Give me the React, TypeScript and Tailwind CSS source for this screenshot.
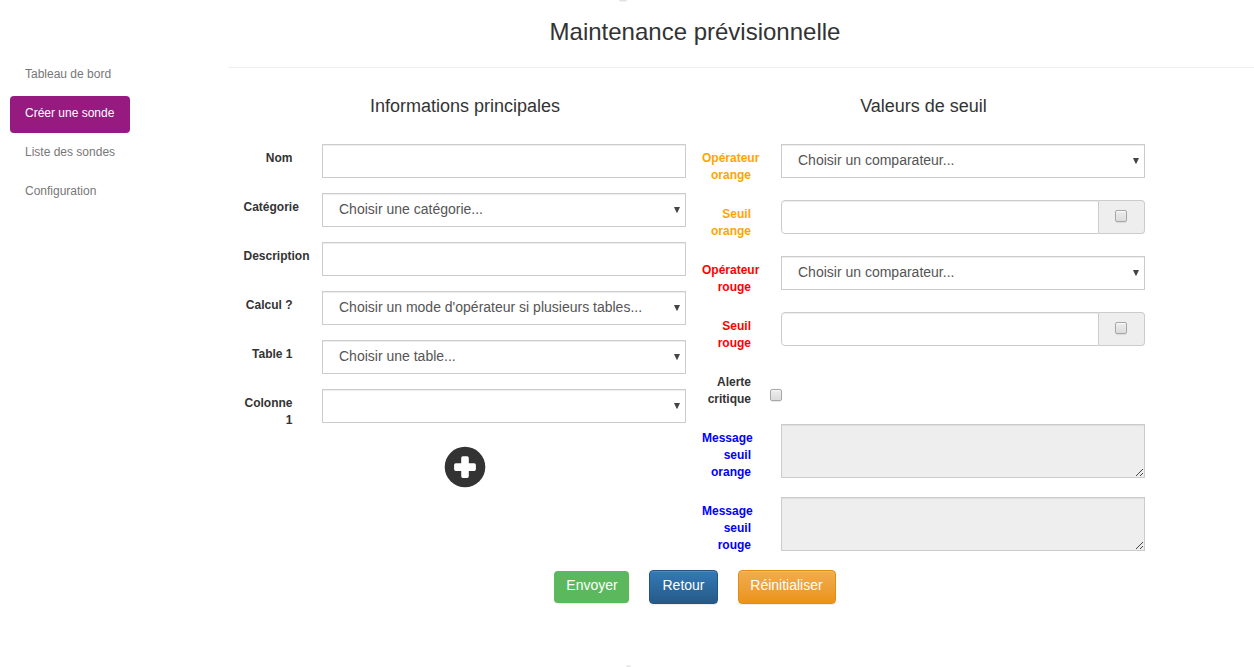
import { ReactNode } from 'react';

const FIELD =
  'h-[34px] w-[364px] border border-[#ccc] bg-white text-sm leading-5 text-[#555] shadow-[inset_0_1px_1px_rgba(0,0,0,0.075)] outline-none';

const NAV = ['Tableau de bord', 'Créer une sonde', 'Liste des sondes', 'Configuration'];

function Row({ label, color = 'text-[#333]', height = 'h-[49px]', gap = 'gap-[30px]', children }: {
  label: string; color?: string; height?: string; gap?: string; children: ReactNode;
}) {
  return (
    <div className={`flex items-start ${height} ${gap}`}>
      <label className={`w-[49px] shrink-0 pt-1.5 text-right text-xs leading-[17px] font-bold ${color}`}>{label}</label>
      {children}
    </div>
  );
}

// Rows of the left column, whose labels sit half a pixel further right.
function InfoRow({ label, children }: { label: string; children: ReactNode }) {
  return (
    <div className="flex h-[49px] items-start gap-[29.5px]">
      <label className="ml-[0.5px] w-[49px] shrink-0 pt-1.5 text-right text-xs leading-[17px] font-bold text-[#333]">{label}</label>
      {children}
    </div>
  );
}

function Select({ text = '' }: { text?: string }) {
  return (
    <div role="combobox" aria-label={text} className={`${FIELD} flex justify-between pt-[5px] pr-[5px] pl-4`}>
      <span>{text}</span>
      <svg className="mt-2 h-[6px] w-[6px]" viewBox="0 0 6 6" fill="#444">
        <path d="M0 0h6L3.3 5.8H2.7z" />
      </svg>
    </div>
  );
}

function Checkbox({ className = '' }: { className?: string }) {
  return (
    <input
      type="checkbox"
      className={`block size-3 shrink-0 appearance-none rounded-[2px] border border-[#a6a6a6] bg-linear-to-b from-[#ededed] to-[#dcdcdc] shadow-[0_1px_1px_rgba(0,0,0,0.08),inset_0_1px_1px_rgba(255,255,255,0.7)] ${className}`}
    />
  );
}

function Threshold() {
  return (
    <div className="flex h-[34px] w-[364px]">
      <input className="w-[318px] rounded-l border border-[#ccc] bg-white px-3 shadow-[inset_0_1px_1px_rgba(0,0,0,0.075)] outline-none" />
      <div className="w-[46px] rounded-r border border-l-0 border-[#ccc] bg-[#eee] pt-[9px] pl-4">
        <Checkbox />
      </div>
    </div>
  );
}

function MessageBox() {
  return (
    <div className="flex h-[54px] w-[364px] items-end justify-end border border-[#ccc] bg-[#eee] pr-px pb-px shadow-[inset_0_1px_1px_rgba(0,0,0,0.075)]">
      <svg className="size-[7px]" viewBox="0 0 7 7" fill="#444" shapeRendering="crispEdges">
        <path d="M0 6h1v1H0zM1 5h1v1H1zM2 4h1v1H2zM3 3h1v1H3zM4 2h1v1H4zM5 1h1v1H5zM6 0h1v1H6zM4 6h1v1H4zM5 5h1v1H5zM6 4h1v1H6z" />
      </svg>
    </div>
  );
}

export default function App() {
  return (
    <div className="relative flex h-[667px] w-[1254px] overflow-hidden bg-white font-['Liberation_Sans',Arial,sans-serif] text-[#333]">
      <div className="absolute top-0 left-[619px] h-[2px] w-[8px] rounded-b-full bg-linear-to-b from-[#dcdcdc] to-[#f7f7f7]" />
      <div className="absolute bottom-0 left-[626px] h-[2px] w-[5px] rounded-t-full bg-[#e9e9e9]" />

      <nav className="flex w-[228px] shrink-0 flex-col items-start gap-0.5 pt-[57px] pl-2.5 text-xs leading-[17px]">
        {NAV.map((item, i) => (
          <a key={item} className={`h-[37px] w-[120px] rounded px-[15px] pt-[9px] whitespace-nowrap ${i === 1 ? 'bg-[#961a80] text-white' : 'text-[#777]'}`}>
            {item}
          </a>
        ))}
      </nav>

      <main className="w-[1026px]">
        <header className="h-[68px] border-b border-[#eee] pt-[19px]">
          <h1 className="w-[934px] text-center text-2xl leading-[26px]">Maintenance prévisionnelle</h1>
        </header>

        <form>
          <div className="flex h-[502px] gap-4 pt-7 pl-[15px]">
            <section className="w-[443px]">
              <h2 className="mb-7 pl-px text-center text-lg leading-5">Informations principales</h2>
              <InfoRow label="Nom"><input className={FIELD} /></InfoRow>
              <InfoRow label="Catégorie"><Select text="Choisir une catégorie..." /></InfoRow>
              <InfoRow label="Description"><input className={FIELD} /></InfoRow>
              <InfoRow label="Calcul ?"><Select text="Choisir un mode d'opérateur si plusieurs tables..." /></InfoRow>
              <InfoRow label="Table 1"><Select text="Choisir une table..." /></InfoRow>
              <InfoRow label="Colonne 1"><Select /></InfoRow>
              <div className="flex justify-center pt-2 pl-px">
                <svg className="size-[42px]" viewBox="0 0 42 42">
                  <circle cx="21" cy="21" r="20.3" fill="#333" />
                  <path
                    fill="#fff"
                    d="M18.9 10.2h4.2a1.7 1.7 0 0 1 1.7 1.7v5.4h5.4a1.7 1.7 0 0 1 1.7 1.7v4.2a1.7 1.7 0 0 1-1.7 1.7h-5.4v5.4a1.7 1.7 0 0 1-1.7 1.7h-4.2a1.7 1.7 0 0 1-1.7-1.7v-5.4h-5.4a1.7 1.7 0 0 1-1.7-1.7v-4.2a1.7 1.7 0 0 1 1.7-1.7h5.4v-5.4a1.7 1.7 0 0 1 1.7-1.7z"
                  />
                </svg>
              </div>
            </section>

            <section className="w-[443px]">
              <h2 className="mb-7 text-center text-lg leading-5">Valeurs de seuil</h2>
              <Row label="Opérateur orange" color="text-[#ffa500]" height="h-14"><Select text="Choisir un comparateur..." /></Row>
              <Row label="Seuil orange" color="text-[#ffa500]" height="h-14"><Threshold /></Row>
              <Row label="Opérateur rouge" color="text-[#ff0000]" height="h-14"><Select text="Choisir un comparateur..." /></Row>
              <Row label="Seuil rouge" color="text-[#ff0000]" height="h-14"><Threshold /></Row>
              <Row label="Alerte critique" height="h-14" gap="gap-[19px]"><Checkbox className="mt-[21px]" /></Row>
              <Row label="Message seuil orange" color="text-[#0000ff]" height="h-[73px]"><MessageBox /></Row>
              <Row label="Message seuil rouge" color="text-[#0000ff]" height="h-[73px]"><MessageBox /></Row>
            </section>
          </div>

          <div className="flex w-[934px] items-center justify-center gap-5 text-sm leading-5 text-white [text-shadow:0_-1px_0_rgba(0,0,0,0.2)]">
            <button type="button" className="h-8 w-[75px] rounded bg-[#5cb85c] pb-1 pl-px shadow-[0_1px_1px_rgba(0,0,0,0.08)]">Envoyer</button>
            <button type="button" className="h-[34px] w-[69px] rounded border border-[#245580] bg-linear-to-b from-[#337ab7] to-[#265a88] pb-1 shadow-[inset_0_1px_0_rgba(255,255,255,0.15),0_1px_1px_rgba(0,0,0,0.075)]">Retour</button>
            <button type="button" className="h-[34px] w-[98px] rounded border border-[#e38d13] bg-linear-to-b from-[#f0ad4e] to-[#eb9316] pr-px pb-1 shadow-[inset_0_1px_0_rgba(255,255,255,0.15),0_1px_1px_rgba(0,0,0,0.075)]">Réinitialiser</button>
          </div>
        </form>
      </main>
    </div>
  );
}
